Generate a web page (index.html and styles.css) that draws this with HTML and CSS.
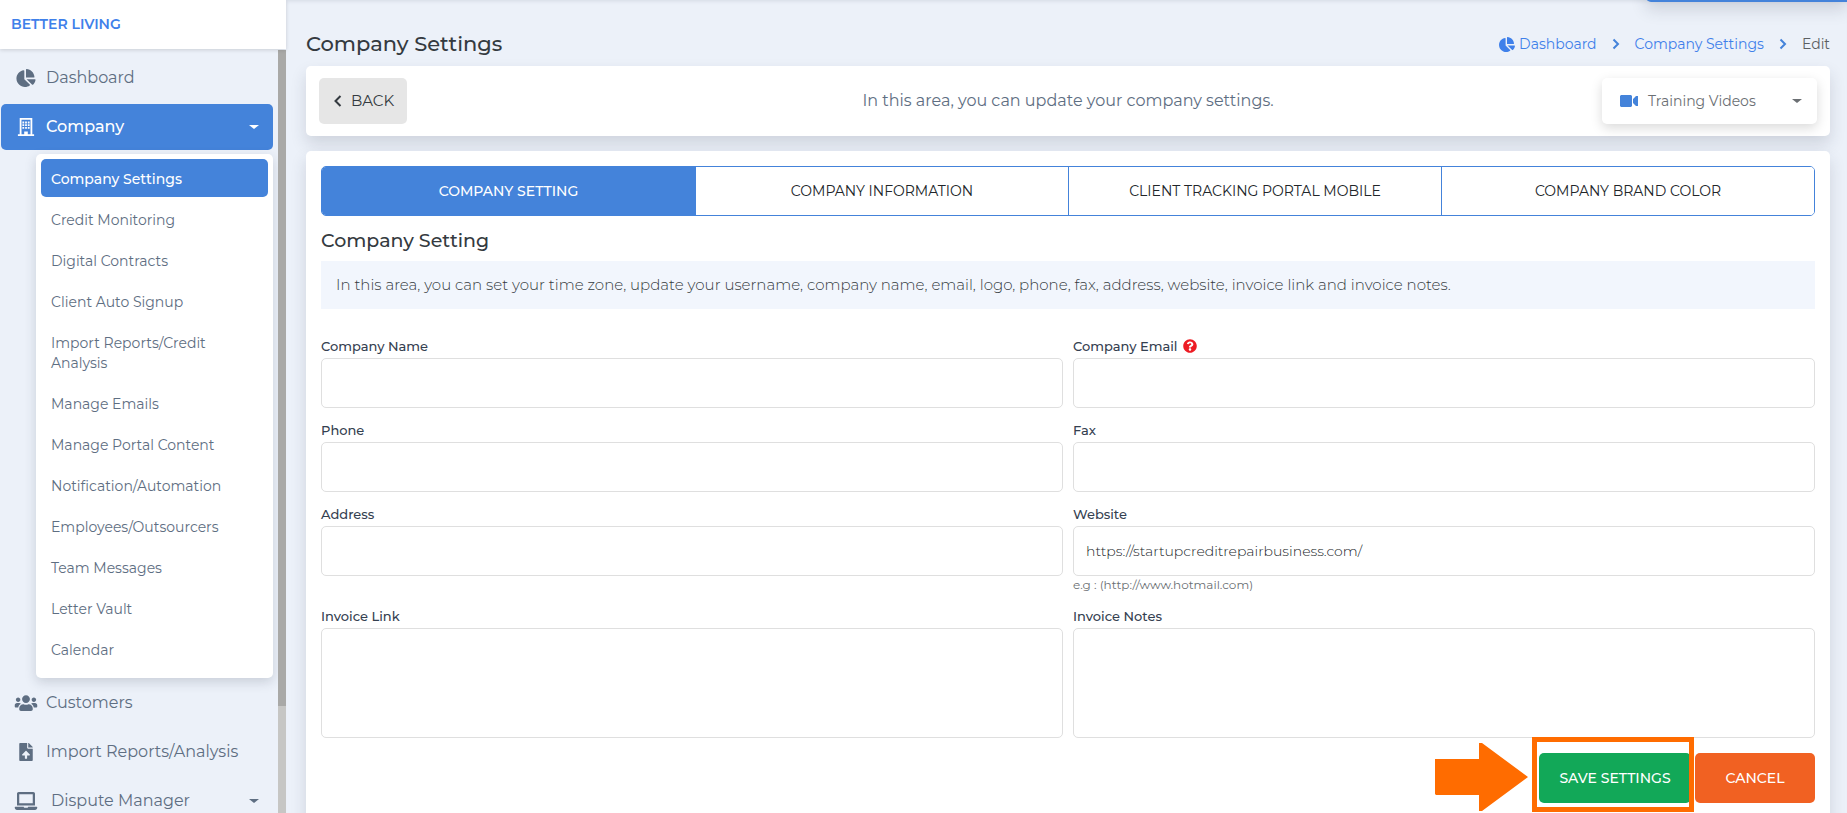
FILE: index.html
```html
<!DOCTYPE html>
<html lang="en">
<head>
    <meta charset="UTF-8">
    <meta name="viewport" content="width=device-width, initial-scale=1.0">
    <title>Company Settings</title>
    <link rel="stylesheet" href="styles.css">
</head>
<body>

    <!-- Shared icons -->
    <svg class="icon-defs" aria-hidden="true">
        <symbol id="icon-pie" viewBox="0 0 544 512"><path d="M527.79 288H290.5l158.03 158.03c6.04 6.04 15.98 6.53 22.19.68 38.7-36.46 65.32-85.61 73.13-140.86 1.34-9.46-6.51-17.85-16.06-17.85zm-15.83-64.8C503.72 103.74 408.26 8.28 288.8.04 279.68-.59 272 7.1 272 16.24V240h223.77c9.14 0 16.82-7.68 16.19-16.8zM224 288V50.71c0-9.55-8.39-17.4-17.84-16.06C86.99 51.49-4.1 155.6.14 280.37 4.5 408.51 114.83 513.59 243.03 511.98c50.4-.63 96.97-16.87 135.26-44.03 7.9-5.6 8.42-17.23 1.57-24.08L224 288z"/></symbol>
        <symbol id="icon-chevron" viewBox="0 0 8 12"><path d="M1.5 1.5 6 6l-4.5 4.5" fill="none" stroke="currentColor" stroke-width="2"/></symbol>
    </svg>

    <div class="layout">
        <!-- Sidebar -->
        <aside class="sidebar">
            <div class="brand"><a href="#">BETTER LIVING</a></div>
            <div class="sidebar-body">
                <nav class="menu">
                    <a href="#" class="menu-item">
                        <svg class="menu-icon"><use href="#icon-pie"/></svg>
                        <span>Dashboard</span>
                    </a>
                    <a href="#" class="menu-item active">
                        <svg class="menu-icon" viewBox="0 0 18 20"><path fill-rule="evenodd" d="M2 0h14v18h2v2H0v-2h2zM4 2v16h3v-3h4v3h3V2zM5 4h2v2H5zM8 4h2v2H8zM11 4h2v2h-2zM5 7h2v2H5zM8 7h2v2H8zM11 7h2v2h-2zM5 10h2v2H5zM8 10h2v2H8zM11 10h2v2h-2z"/></svg>
                        <span>Company</span>
                        <i class="caret"></i>
                    </a>
                    <div class="submenu">
                        <a href="#" class="active">Company Settings</a>
                        <a href="#">Credit Monitoring</a>
                        <a href="#">Digital Contracts</a>
                        <a href="#">Client Auto Signup</a>
                        <a href="#">Import Reports/Credit Analysis</a>
                        <a href="#">Manage Emails</a>
                        <a href="#">Manage Portal Content</a>
                        <a href="#">Notification/Automation</a>
                        <a href="#">Employees/Outsourcers</a>
                        <a href="#">Team Messages</a>
                        <a href="#">Letter Vault</a>
                        <a href="#">Calendar</a>
                    </div>
                    <a href="#" class="menu-item">
                        <svg class="menu-icon wide" viewBox="0 0 640 512"><path d="M96 224c35.3 0 64-28.7 64-64s-28.7-64-64-64-64 28.7-64 64 28.7 64 64 64zm448 0c35.3 0 64-28.7 64-64s-28.7-64-64-64-64 28.7-64 64 28.7 64 64 64zm32 32h-64c-17.6 0-33.5 7.1-45.1 18.6 40.3 22.1 68.9 62 75.1 109.4h66c17.7 0 32-14.3 32-32v-32c0-35.3-28.7-64-64-64zm-256 0c61.9 0 112-50.1 112-112S381.9 32 320 32 208 82.1 208 144s50.1 112 112 112zm76.8 32h-8.3c-20.8 10-43.9 16-68.5 16s-47.6-6-68.5-16h-8.3C179.6 288 128 339.6 128 403.2V432c0 26.5 21.5 48 48 48h288c26.5 0 48-21.5 48-48v-28.8c0-63.6-51.6-115.2-115.2-115.2zm-223.7-13.4C161.5 263.1 145.6 256 128 256H64c-35.3 0-64 28.7-64 64v32c0 17.7 14.3 32 32 32h65.9c6.3-47.4 34.9-87.3 75.2-109.4z"/></svg>
                        <span>Customers</span>
                    </a>
                    <a href="#" class="menu-item">
                        <svg class="menu-icon" viewBox="0 0 384 512"><path d="M224 136V0H24C10.7 0 0 10.7 0 24v464c0 13.3 10.7 24 24 24h336c13.3 0 24-10.7 24-24V160H248c-13.2 0-24-10.8-24-24zm65.18 216.01H224v80c0 8.84-7.16 16-16 16h-32c-8.84 0-16-7.16-16-16v-80H94.82c-14.28 0-21.41-17.29-11.27-27.36l96.42-95.7c6.65-6.61 17.39-6.61 24.04 0l96.42 95.7c10.15 10.07 3.03 27.36-11.25 27.36zM377 105L279.1 7c-4.5-4.5-10.6-7-17-7H256v128h128v-6.1c0-6.3-2.5-12.4-7-16.9z"/></svg>
                        <span>Import Reports/Analysis</span>
                    </a>
                    <a href="#" class="menu-item">
                        <svg class="menu-icon wide" viewBox="0 0 640 512"><path d="M624 416H381.54c-.74 19.81-14.71 32-32.74 32H288c-18.69 0-33.02-17.47-32.77-32H16c-8.8 0-16 7.2-16 16v16c0 35.2 28.8 64 64 64h512c35.2 0 64-28.8 64-64v-16c0-8.8-7.2-16-16-16zM576 48c0-26.4-21.6-48-48-48H112C85.6 0 64 21.6 64 48v336h512V48zm-64 272H128V64h384v256z"/></svg>
                        <span class="indent">Dispute Manager</span>
                        <i class="caret"></i>
                    </a>
                </nav>
                <div class="scrollbar"><div class="scroll-thumb"></div></div>
            </div>
        </aside>

        <!-- Content -->
        <main class="content">
            <button type="button" class="top-tab" aria-label="Open notice"></button>

            <header class="page-head">
                <h1>Company Settings</h1>
                <nav class="breadcrumb" aria-label="Breadcrumb">
                    <a href="#"><svg class="crumb-icon"><use href="#icon-pie"/></svg>Dashboard</a>
                    <svg class="chevron"><use href="#icon-chevron"/></svg>
                    <a href="#">Company Settings</a>
                    <svg class="chevron"><use href="#icon-chevron"/></svg>
                    <span>Edit</span>
                </nav>
            </header>

            <section class="card toolbar">
                <button type="button" class="btn-back">
                    <svg class="back-icon" viewBox="0 0 8 12"><path d="M6.5 1 1.5 6l5 5" fill="none" stroke="currentColor" stroke-width="2"/></svg>BACK
                </button>
                <p>In this area, you can update your company settings.</p>
                <button type="button" class="btn-videos">
                    <svg class="video-icon" viewBox="0 0 18 12"><path d="M1 0h10l1 1v10l-1 1H1l-1-1V1zM13 4l3-3h2v10h-2l-3-3z"/></svg>
                    Training Videos
                    <i class="caret"></i>
                </button>
            </section>

            <section class="card panel">
                <div class="tabs" role="tablist">
                    <button type="button" role="tab" class="active">COMPANY SETTING</button>
                    <button type="button" role="tab">COMPANY INFORMATION</button>
                    <button type="button" role="tab">CLIENT TRACKING PORTAL MOBILE</button>
                    <button type="button" role="tab">COMPANY BRAND COLOR</button>
                </div>

                <h2>Company Setting</h2>
                <p class="info">In this area, you can set your time zone, update your username, company name, email, logo, phone, fax, address, website, invoice link and invoice notes.</p>

                <form>
                    <div class="form-grid">
                        <div class="field">
                            <label for="name">Company Name</label>
                            <input type="text" id="name">
                        </div>
                        <div class="field">
                            <label for="email">Company Email <svg class="help-icon" viewBox="0 0 512 512"><path d="M504 256c0 136.997-111.043 248-248 248S8 392.997 8 256C8 119.083 119.043 8 256 8s248 111.083 248 248zM262.655 90c-54.497 0-89.255 22.957-116.549 63.758-3.536 5.286-2.353 12.415 2.715 16.258l34.699 26.31c5.205 3.947 12.621 3.008 16.665-2.122 17.864-22.658 30.113-35.797 57.303-35.797 20.429 0 45.698 13.148 45.698 32.958 0 14.976-12.363 22.667-32.534 33.976C247.128 238.528 216 254.941 216 296v4c0 6.627 5.373 12 12 12h56c6.627 0 12-5.373 12-12v-1.333c0-28.462 83.186-29.647 83.186-106.667 0-58.002-60.165-102-116.531-102zM256 338c-25.365 0-46 20.635-46 46 0 25.364 20.635 46 46 46s46-20.636 46-46c0-25.365-20.635-46-46-46z"/></svg></label>
                            <input type="text" id="email">
                        </div>
                        <div class="field">
                            <label for="phone">Phone</label>
                            <input type="text" id="phone">
                        </div>
                        <div class="field">
                            <label for="fax">Fax</label>
                            <input type="text" id="fax">
                        </div>
                        <div class="field">
                            <label for="address">Address</label>
                            <input type="text" id="address">
                        </div>
                        <div class="field">
                            <label for="website">Website</label>
                            <input type="text" id="website" value="https://startupcreditrepairbusiness.com/">
                            <small>e.g : (http://www.hotmail.com)</small>
                        </div>
                        <div class="field">
                            <label for="link">Invoice Link</label>
                            <textarea id="link"></textarea>
                        </div>
                        <div class="field">
                            <label for="notes">Invoice Notes</label>
                            <textarea id="notes"></textarea>
                        </div>
                    </div>

                    <div class="actions">
                        <div class="save-wrap">
                            <button type="submit" class="btn btn-save">SAVE SETTINGS</button>
                            <svg class="arrow" viewBox="0 0 93 70"><path d="M0 17h44V1h3l46 34-46 34h-3V53H1l-1-1z"/></svg>
                        </div>
                        <button type="button" class="btn btn-cancel">CANCEL</button>
                    </div>
                </form>
            </section>
        </main>
    </div>

</body>
</html>
```
FILE: styles.css
```css
* {
    box-sizing: border-box;
}

body {
    margin: 0;
    font-family: Montserrat, Inter, sans-serif;
    font-size: 15px;
    line-height: 20px;
    color: #5e6e82;
    background: #ecf1f9;
}

a {
    color: #3f80ea;
    text-decoration: none;
}

button, input, textarea {
    font: inherit;
    color: inherit;
}

button {
    border: none;
    cursor: pointer;
}

svg {
    fill: currentColor;
    flex: none;
}

.icon-defs {
    display: none;
}

.layout {
    display: flex;
    height: 100vh;
    overflow: hidden;
}

.caret {
    flex: none;
    margin-left: auto;
    border: 5px solid transparent;
    border-top: 4px solid currentColor;
    border-bottom: none;
}

/* Sidebar */
.sidebar {
    display: flex;
    flex-direction: column;
    flex: none;
    width: 286px;
}

.brand {
    flex: none;
    padding: 14px 11px 15px;
    background: #fff;
    box-shadow: 0 1px 4px rgba(0, 0, 0, 0.15);
    font-size: 14px;
    font-weight: 600;
    z-index: 1;
}

.sidebar-body {
    display: flex;
    flex: 1;
    min-height: 0;
}

.menu {
    flex: 1;
    padding: 6px 5px 0 1px;
    overflow: hidden;
}

.menu-item {
    display: flex;
    align-items: center;
    gap: 8px;
    height: 46px;
    margin-bottom: 3px;
    padding: 0 14px 0 13px;
    border-radius: 5px;
    font-size: 16px;
    color: #5e6e82;
}

.menu-item.active {
    margin-bottom: 4px;
    background: #4483da;
    font-weight: 500;
    color: #fff;
}

.menu-icon {
    width: 24px;
    height: 18px;
}

.menu-icon.wide {
    height: 18px;
}

.indent {
    margin-left: 5px;
}

.submenu {
    margin: 0 0 2px 35px;
    padding: 5px 5px 7px;
    border-radius: 5px;
    background: #fff;
    box-shadow: 0 4px 12px rgba(40, 50, 70, 0.18);
}

.submenu a {
    display: block;
    margin-bottom: 3px;
    padding: 10px 20px 8px 10px;
    border-radius: 5px;
    font-size: 14px;
    color: #5e6e82;
}

.submenu a.active {
    background: #4483da;
    font-weight: 500;
    color: #fff;
}

.scrollbar {
    width: 8px;
    margin-top: 1px;
    background: #c6c6c4;
}

.scroll-thumb {
    height: 86%;
    background: #a9a9a7;
}

/* Content */
.content {
    position: relative;
    flex: 1;
    min-width: 0;
    padding: 22px 17px 0 20px;
    box-shadow: inset 0 4px 4px -3px rgba(40, 50, 70, 0.12);
}

.top-tab {
    position: absolute;
    top: -28px;
    right: 0;
    width: 201px;
    height: 30px;
    padding: 0;
    border-radius: 5px 0 0 5px;
    background: #4483da;
    box-shadow: 0 8px 16px rgba(40, 50, 70, 0.15);
}

.page-head {
    display: flex;
    align-items: center;
    justify-content: space-between;
    height: 44px;
}

h1, h2 {
    margin: 0;
    font-weight: 500;
    color: #343a40;
}

h1 {
    font-size: 21px;
    line-height: 28px;
}

.breadcrumb {
    display: flex;
    align-items: center;
    gap: 15px;
    font-size: 14px;
    color: #5b5f63;
}

.breadcrumb a {
    display: flex;
    align-items: center;
    gap: 4px;
}

.crumb-icon {
    width: 16px;
    height: 15px;
}

.chevron {
    width: 8px;
    height: 12px;
    color: #4483da;
}

.card {
    border-radius: 5px;
    background: #fff;
    box-shadow: 0 8px 16px rgba(40, 50, 70, 0.15);
}

.toolbar {
    display: grid;
    grid-template-columns: 1fr auto 1fr;
    align-items: center;
    margin-bottom: 15px;
    padding: 12px 13px;
}

.toolbar p {
    margin: 0;
    font-size: 16px;
}

.toolbar button {
    display: flex;
    align-items: center;
    height: 46px;
    padding: 0 15px;
    border-radius: 5px;
}

.btn-back {
    gap: 9px;
    width: 88px;
    background: #e6e6e6;
    color: #343a40;
}

.back-icon {
    width: 8px;
    height: 12px;
}

.btn-videos {
    gap: 10px;
    justify-self: end;
    width: 215px;
    background: #fff;
    box-shadow: 0 4px 12px rgba(0, 0, 0, 0.15);
    font-size: 14px;
    color: #6b6f73;
}

.toolbar .btn-videos {
    padding-left: 18px;
}

.video-icon {
    width: 18px;
    height: 12px;
    color: #4483da;
}

.panel {
    min-height: 100%;
    padding: 15px;
}

.tabs {
    display: grid;
    grid-template-columns: repeat(4, 1fr);
    border: 1px solid #4483da;
    border-radius: 5px;
    overflow: hidden;
}

.tabs button {
    height: 48px;
    border-left: 1px solid #4483da;
    background: #fff;
    font-size: 14px;
    color: #212529;
}

.tabs button.active {
    border-left: none;
    background: #4483da;
    font-weight: 500;
    color: #fff;
}

h2 {
    padding: 13px 0 8px;
    font-size: 19px;
    line-height: 24px;
}

.info {
    margin: 0 0 28px;
    padding: 14px 15px;
    background: #f2f6fd;
    font-weight: 300;
    color: #343a40;
}

/* Form */
.form-grid {
    display: grid;
    grid-template-columns: 1fr 1fr;
    column-gap: 10px;
    row-gap: 13px;
}

.field {
    display: flex;
    flex-direction: column;
}

.field label {
    display: flex;
    align-items: center;
    gap: 6px;
    margin-bottom: 3px;
    font-size: 13px;
    font-weight: 500;
    color: #344050;
    line-height: 18px;
}

.help-icon {
    width: 14px;
    height: 14px;
    color: #ed1c24;
}

.field input, .field textarea {
    width: 100%;
    height: 50px;
    padding: 0 12px;
    border: 1px solid #dfdfdf;
    border-radius: 5px;
    background: #fff;
    font-size: 14px;
    font-weight: 300;
    color: #212529;
}

.field textarea {
    height: 110px;
    padding: 12px;
    resize: none;
}

.field small {
    height: 18px;
    font-size: 12px;
    line-height: 18px;
    color: #6b6f73;
}

/* Buttons */
.actions {
    display: flex;
    justify-content: flex-end;
    gap: 4px;
    margin-top: 15px;
}

.btn {
    height: 50px;
    border-radius: 5px;
    font-size: 14px;
    font-weight: 500;
    color: #fff;
}

.btn-save {
    width: 152px;
    background: #12a858;
}

.btn-cancel {
    width: 120px;
    background: #f16122;
}

/* Callout around the save button */
.save-wrap {
    position: relative;
}

.save-wrap::after {
    content: "";
    position: absolute;
    inset: -16px -3px -9px -7px;
    border: 5px solid #ff6c00;
    pointer-events: none;
}

.arrow {
    position: absolute;
    right: 163px;
    top: -11px;
    width: 93px;
    height: 70px;
    color: #ff6c00;
}
```
